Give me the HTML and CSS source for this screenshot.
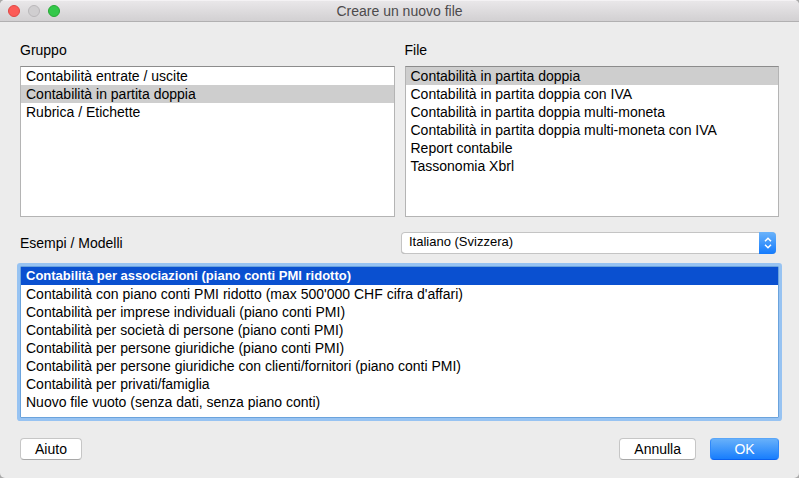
FILE: index.html
```html
<!DOCTYPE html>
<html lang="it">

<head>
    <meta charset="UTF-8" />
    <meta name="viewport" content="width=device-width, initial-scale=1" />
    <title>Creare un nuovo file</title>
    <link rel="stylesheet" href="styles.css">
</head>

<body>
    <form class="dialog">
        <header class="titlebar">
            <div class="lights">
                <button type="button" class="light light-close" aria-label="Chiudi"></button>
                <button type="button" class="light light-min" aria-label="Riduci" disabled></button>
                <button type="button" class="light light-zoom" aria-label="Ingrandisci"></button>
            </div>
            <h1 class="title">Creare un nuovo file</h1>
        </header>
        <main class="content">
            <div class="columns">
                <div class="field">
                    <label for="group">Gruppo</label>
                    <select class="list" id="group" name="group" size="8">
                        <option>Contabilità entrate / uscite</option>
                        <option selected>Contabilità in partita doppia</option>
                        <option>Rubrica / Etichette</option>
                    </select>
                </div>
                <div class="field">
                    <label for="file">File</label>
                    <select class="list" id="file" name="file" size="8">
                        <option selected>Contabilità in partita doppia</option>
                        <option>Contabilità in partita doppia con IVA</option>
                        <option>Contabilità in partita doppia multi-moneta</option>
                        <option>Contabilità in partita doppia multi-moneta con IVA</option>
                        <option>Report contabile</option>
                        <option>Tassonomia Xbrl</option>
                    </select>
                </div>
            </div>
            <div class="templates-head">
                <label for="templates">Esempi / Modelli</label>
                <div class="picker">
                    <select class="picker-select" id="language" name="language" aria-label="Lingua">
                        <option>Italiano (Svizzera)</option>
                    </select>
                    <span class="picker-arrows">
                        <svg width="8" height="12" viewBox="0 0 8 12" fill="none" stroke="#fff" stroke-width="1.5">
                            <path d="M1 4.3 4 1.3 7 4.3M1 7.7 4 10.7 7 7.7" />
                        </svg>
                    </span>
                </div>
            </div>
            <select class="list list-active" id="templates" name="templates" size="8">
                <option selected>Contabilità per associazioni (piano conti PMI ridotto)</option>
                <option>Contabilità con piano conti PMI ridotto (max 500'000 CHF cifra d'affari)</option>
                <option>Contabilità per imprese individuali (piano conti PMI)</option>
                <option>Contabilità per società di persone (piano conti PMI)</option>
                <option>Contabilità per persone giuridiche (piano conti PMI)</option>
                <option>Contabilità per persone giuridiche con clienti/fornitori (piano conti PMI)</option>
                <option>Contabilità per privati/famiglia</option>
                <option>Nuovo file vuoto (senza dati, senza piano conti)</option>
            </select>
            <div class="actions">
                <button type="button" class="btn btn-help">Aiuto</button>
                <button type="button" class="btn btn-cancel">Annulla</button>
                <button type="submit" class="btn btn-ok">OK</button>
            </div>
        </main>
    </form>
</body>

</html>
```

FILE: styles.css
```css
* {
    box-sizing: border-box;
}

body {
    margin: 0;
    background-color: #a8a8a8;
}

body,
select,
button {
    font-family: "Liberation Sans", Arial, sans-serif;
    font-size: 14px;
    line-height: 16px;
    color: #000;
}

.dialog {
    min-height: 100vh;
    background-color: #ececec;
    border-radius: 5px;
    overflow: hidden;
}

.titlebar {
    display: grid;
    grid-template-columns: 1fr auto 1fr;
    align-items: center;
    height: 22px;
    padding: 0 8px;
    background: linear-gradient(#e9e7e9, #d2d0d2);
    border-top: 1px solid #f4f2f4;
    border-bottom: 1px solid #b1b0b1;
}

.lights {
    display: flex;
    gap: 8px;
}

.light {
    width: 12px;
    height: 12px;
    padding: 0;
    border: 1px solid;
    border-radius: 50%;
}

.light-close {
    background-color: #fc5b57;
    border-color: #df4744;
}

.light-min {
    background-color: #d0ced0;
    border-color: #b9b7b9;
}

.light-zoom {
    background-color: #34c84a;
    border-color: #27a835;
}

.title {
    margin: 0;
    font-size: 14px;
    font-weight: normal;
    color: #4c4a4c;
}

.content {
    padding: 20px;
    padding-bottom: 18px;
}

.columns {
    display: grid;
    grid-template-columns: 1fr 1fr;
    gap: 10px;
}

.field {
    display: flex;
    flex-direction: column;
    gap: 8px;
}

.list {
    display: block;
    width: 100%;
    height: 151px;
    padding: 0;
    background-color: #fff;
    border: 1px solid #b4b4b4;
    border-top-color: #8c8c8c;
    border-radius: 0;
    outline: none;
    overflow: hidden;
}

.list option {
    height: 18px;
    padding: 1px 5px 0;
    line-height: 18px;
}

.list option:checked {
    background-image: linear-gradient(#cecece, #cecece);
    -webkit-text-fill-color: #000;
}

.list-active {
    height: 152px;
    border-color: #6ba3dc;
    box-shadow: 0 0 0 3px #97c3f2;
    border-radius: 1px;
}

.list-active option:checked {
    background-image: linear-gradient(#0a50d0, #0a50d0);
    font-size: 13px;
    font-weight: bold;
    -webkit-text-fill-color: #fff;
}

.templates-head {
    display: flex;
    align-items: center;
    justify-content: space-between;
    margin: 15px 0 12px;
    padding-right: 3px;
}

.picker {
    display: flex;
    width: calc(50% - 3px);
    height: 22px;
    background-color: #fff;
    border-radius: 4px;
    box-shadow: inset 0 0 0 1px #c4c4c4, inset 0 -1px 0 #a6a6a6;
}

.picker-select {
    flex: 1;
    padding: 0 8px 2px;
    background: none;
    border: none;
    font-size: 13px;
    appearance: none;
}

.picker-arrows {
    display: flex;
    align-items: center;
    justify-content: center;
    width: 17px;
    background: linear-gradient(#6bb3fa, #147bfd);
    border-radius: 0 4px 4px 0;
    pointer-events: none;
}

.actions {
    display: flex;
    margin-top: 20px;
}

.btn {
    height: 22px;
    padding: 0 14px;
    background-color: #fff;
    border: 1px solid #c6c6c6;
    border-bottom-color: #a8a8a8;
    border-radius: 4px;
}

.btn-help {
    min-width: 62px;
    margin-right: auto;
}

.btn-cancel {
    min-width: 76px;
    margin-right: 14px;
}

.btn-ok {
    min-width: 69px;
    background: linear-gradient(#6bb3fa, #147bfd);
    border-color: #5aa6f8 #2f88fa #0a62f0;
    background-origin: border-box;
    color: #fff;
}
```
